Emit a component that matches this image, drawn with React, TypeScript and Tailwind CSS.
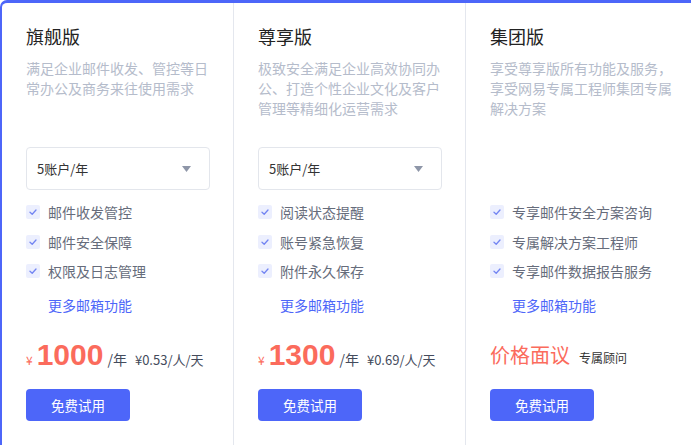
import React from "react";

type Plan = {
  title: string;
  desc: string;
  select: boolean;
  features: string[];
  price: "num" | "talk";
  amount?: string;
  perDay?: string;
};

const plans: Plan[] = [
  {
    title: "旗舰版",
    desc: "满足企业邮件收发、管控等日常办公及商务来往使用需求",
    select: true,
    features: ["邮件收发管控", "邮件安全保障", "权限及日志管理"],
    price: "num",
    amount: "1000",
    perDay: "¥0.53/人/天",
  },
  {
    title: "尊享版",
    desc: "极致安全满足企业高效协同办公、打造个性企业文化及客户管理等精细化运营需求",
    select: true,
    features: ["阅读状态提醒", "账号紧急恢复", "附件永久保存"],
    price: "num",
    amount: "1300",
    perDay: "¥0.69/人/天",
  },
  {
    title: "集团版",
    desc: "享受尊享版所有功能及服务，享受网易专属工程师集团专属解决方案",
    select: false,
    features: ["专享邮件安全方案咨询", "专属解决方案工程师", "专享邮件数据报告服务"],
    price: "talk",
  },
];

const font = { fontFamily: '"Noto Sans CJK SC", "Liberation Sans", sans-serif' };

function Check() {
  return (
    <span className="flex h-[14px] w-[14px] shrink-0 items-center justify-center rounded-[2px] bg-[#eceffe]">
      <svg width="10" height="10" viewBox="0 0 10 10" fill="none">
        <path d="M2 5.2 L4.2 7.2 L8 3" stroke="#7385f2" strokeWidth="1.3" strokeLinecap="round" strokeLinejoin="round" />
      </svg>
    </span>
  );
}

function Column({ p, last }: { p: Plan; last: boolean }) {
  return (
    <div className={`flex w-[232px] shrink-0 flex-col px-6 pt-[20px] ${last ? "" : "border-r border-[#e4e7ee]"}`}>
      <div className="h-[26px] text-[18px] leading-[26px] text-[#222]">{p.title}</div>
      <div className="mt-[9px] h-[60px] text-[14px] leading-[20px] text-[#b5bccb]">{p.desc}</div>
      {p.select ? (
        <div className="mt-[29px] flex h-[43px] w-[184px] items-center justify-between rounded-[4px] border border-[#e3e6ec] pl-[10px] pr-[18px]">
          <span className="text-[13px] text-[#333]">5账户/年</span>
          <svg width="9" height="6" viewBox="0 0 9 6">
            <path d="M0 0 H9 L4.5 6 Z" fill="#8e96a8" />
          </svg>
        </div>
      ) : (
        <div className="mt-[29px] h-[43px]" />
      )}
      <div className="mt-[12px] flex flex-col gap-[9.5px]">
        {p.features.map((f) => (
          <div key={f} className="flex h-[20px] items-center gap-[8px]">
            <Check />
            <span className="text-[14px] leading-[20px] text-[#666c7b]">{f}</span>
          </div>
        ))}
      </div>
      <div className="mt-[14px] h-[20px] pl-[22px] text-[14px] leading-[20px] text-[#4d66f9]">更多邮箱功能</div>
      <div className="mt-[20px] flex h-[40px] items-baseline">
        {p.price === "num" ? (
          <>
            <span className="mr-[4px] text-[12px] text-[#fb6b5c]">¥</span>
            <span
              className="text-[30px] font-bold leading-[40px] text-[#fb6b5c]"
              style={{ fontFamily: '"Liberation Sans", sans-serif' }}
            >
              {p.amount}
            </span>
            <span className="ml-[4px] text-[14px] text-[#444b5c]">/年</span>
            <span className="ml-[8px] text-[13px] text-[#444b5c]">{p.perDay}</span>
          </>
        ) : (
          <>
            <span className="text-[20px] leading-[40px] text-[#fb6b5c]">价格面议</span>
            <span className="ml-[9px] text-[12px] text-[#333]">专属顾问</span>
          </>
        )}
      </div>
      <button className="mt-[14px] flex h-[32px] w-[104px] items-center justify-center rounded-[4px] bg-[#4d66f9] text-[13.5px] text-white">
        免费试用
      </button>
    </div>
  );
}

export default function App() {
  return (
    <div className="h-[445px] w-[691px] overflow-hidden bg-white" style={font}>
      <div className="flex h-[460px] w-[720px] rounded-tl-[7px] border-l-2 border-t-[3px] border-[#4d66f9] bg-white">
        {plans.map((p, i) => (
          <Column key={p.title} p={p} last={i === plans.length - 1} />
        ))}
      </div>
    </div>
  );
}
